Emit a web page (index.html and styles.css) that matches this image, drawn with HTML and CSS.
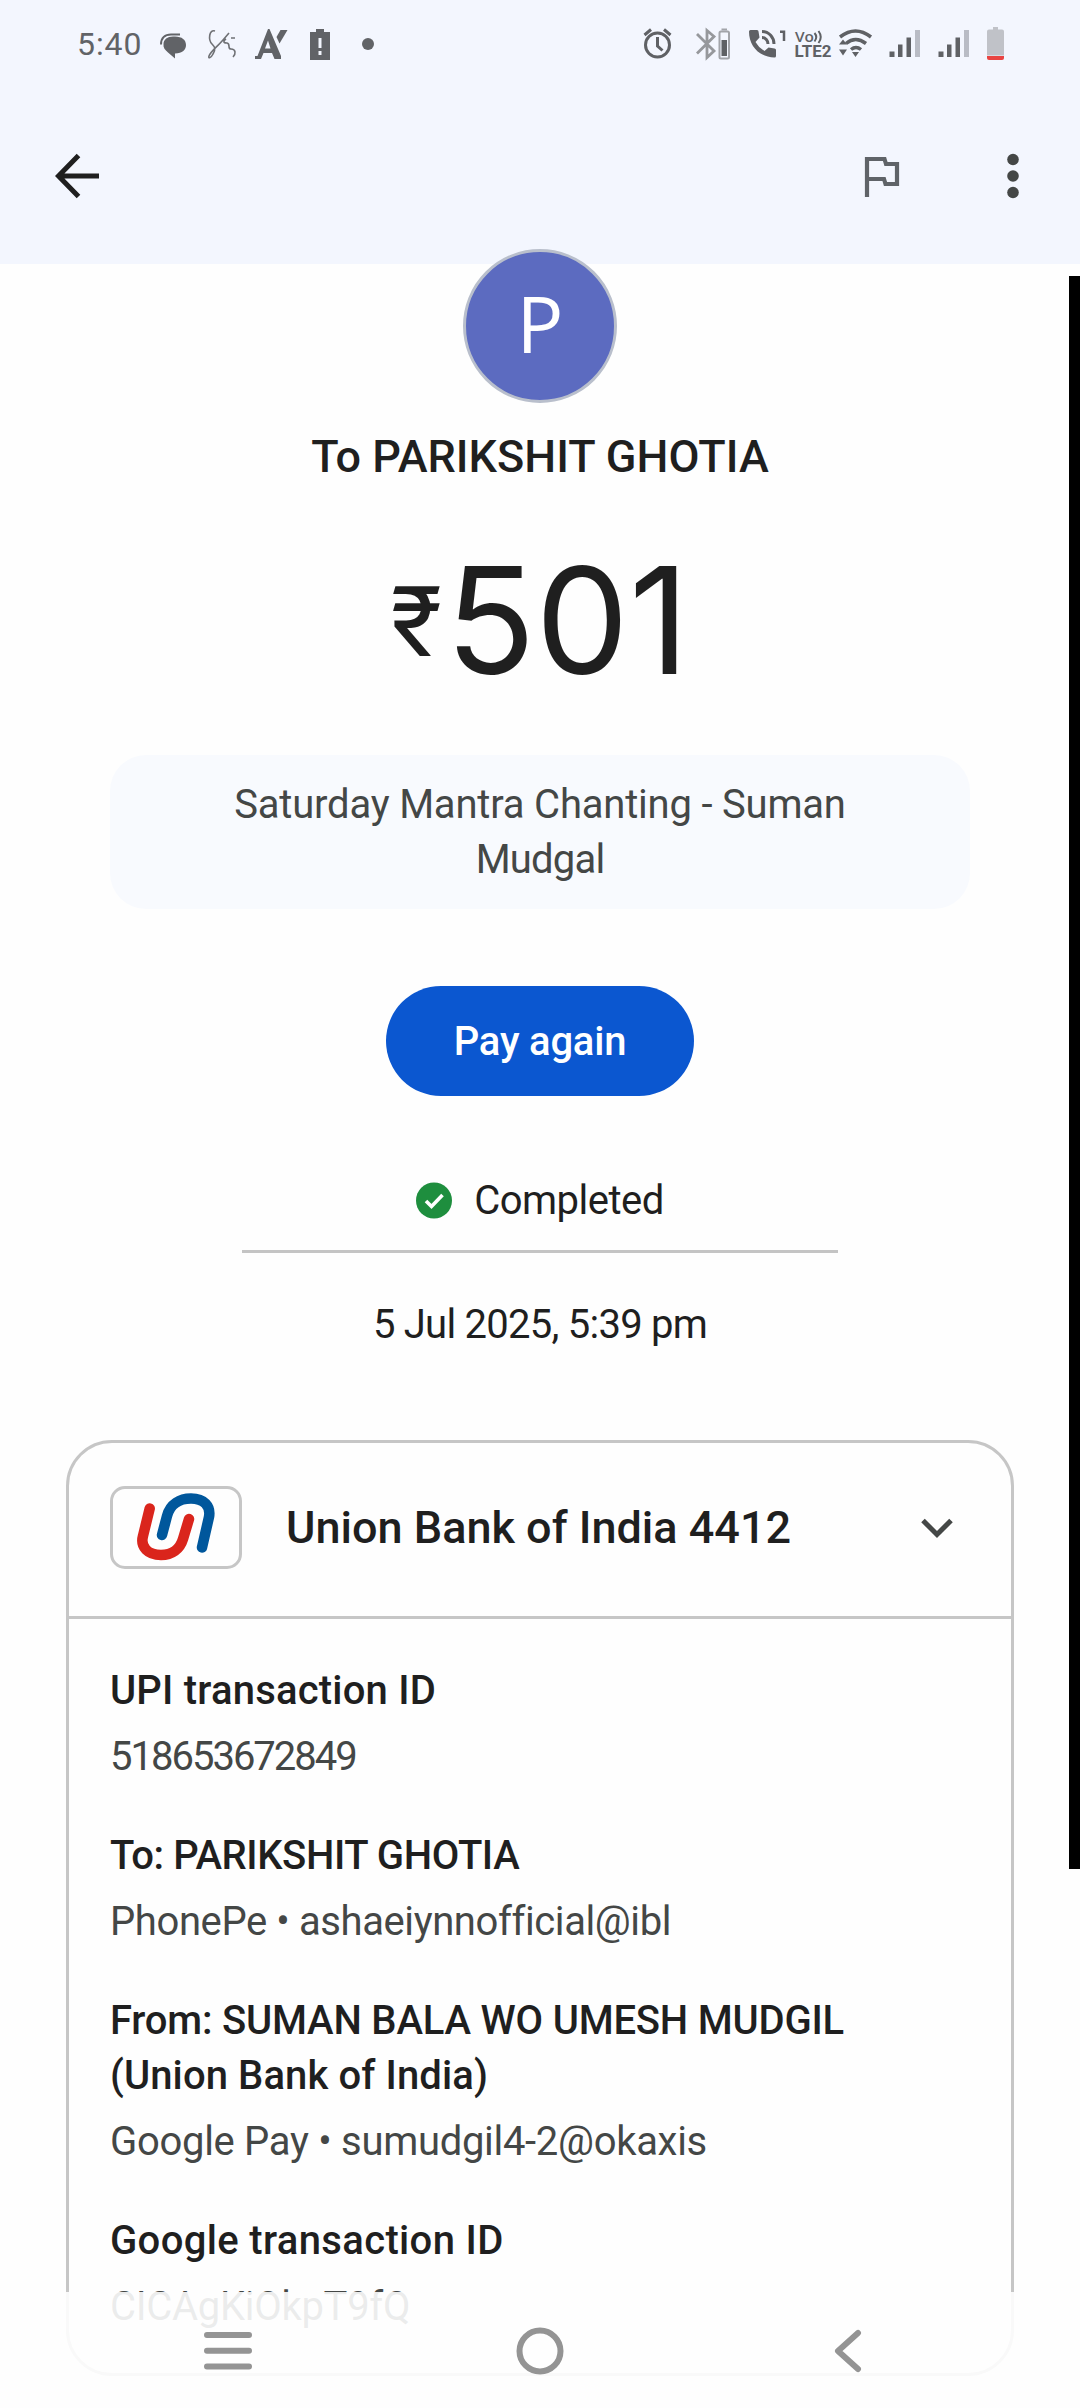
FILE: index.html
```html
<!DOCTYPE html>
<html lang="en">
<head>
<meta charset="utf-8">
<title>Transaction details</title>
<link rel="stylesheet" href="styles.css">
</head>
<body>
<div class="screen">
  <header class="top">
    <div class="status-bar">
      <span class="clock">5:40</span>
      <svg class="status-left" width="225" height="40" viewBox="155 24 225 40" fill="#616367">
        <path d="M161 44.500c0-6.500 4-10 10-10h9" fill="none" stroke="#616367" stroke-width="2"/>
        <path d="M173 36.500h2c7 0 11 3.500 11 8.500s-3.500 8-11 8.500v5l-7-6c-3-2.500-5-5-4.500-8.500 0-4.500 4-7.500 9.500-7.500z"/>
        <path d="M215 31c-6-2-7 9-3 13 3 3 4 5 1 10-2 4-5 5-4 2 2-5 8-9 14-16l6-7M226 39c-3 2-3 4 1 4 4 1 0 6 4 6 5 0 5 5 2 8M231 38l4 0" fill="none" stroke="#6f7175" stroke-width="1.600"/>
        <path fill-rule="evenodd" d="M255 59v-3h2.500l10.500-27h1.500L281 56v3h-6.500l-2.500-6h-8.500l-2.500 6zM265 48.500h5.500l-2.500-8z"/>
        <path d="M280.500 30h7l-8 13.500-3-6.500z"/>
        <path fill-rule="evenodd" d="M310 32h6v-3h8v3h6v28h-20zM318.500 38v10h3v-10zM318.500 51v4h3v-4z"/>
        <circle cx="368" cy="44" r="6"/>
      </svg>
      <svg class="status-right" width="370" height="40" viewBox="640 24 370 40" fill="#5f6165">
        <g fill="none" stroke="#5f6165" stroke-width="3">
          <circle cx="657.500" cy="45" r="12"/>
          <path d="M657.500 37v9l5 4.500M644.500 35l6.500-5.500M670.500 35l-6.500-5.500"/>
        </g>
        <path d="M697 34l17 17-7 6.500v-27l7 6-17 17" fill="none" stroke="#96989c" stroke-width="2.800"/>
        <rect x="719.500" y="31.500" width="9.500" height="27" rx="1.500" fill="none" stroke="#a2a4a9" stroke-width="2"/>
        <rect x="721.500" y="28.500" width="5.500" height="2" fill="#a2a4a9"/>
        <rect x="721.500" y="40" width="5.500" height="16"/>
        <path d="M749 31.500q0-1.500 1.500-1.500h6.500q1.500 0 1.500 1.500l1 6-4 4.500q3 5.500 9 9l4-3.500 6 1q1.500 0 1.500 1.500v6q0 1.500-1.500 1.500C759 57 749 46 749 31.500z"/>
        <path d="M762 31.500c7 0 12 6 12 12.500M762 37.500c3.500 0 6 3 6 6.500" fill="none" stroke="#5f6165" stroke-width="3"/>
        <path d="M780 31.700h4v9.300" fill="none" stroke="#5f6165" stroke-width="2.500"/>
        <text class="net-vo" x="795" y="42" textLength="19" lengthAdjust="spacingAndGlyphs">Vo</text>
        <path d="M814.500 33q3.500 4 0 8.500M818.500 31q4.500 6 0 12" fill="none" stroke="#5f6165" stroke-width="2"/>
        <text class="net-lte" x="794.500" y="57" textLength="37" lengthAdjust="spacingAndGlyphs">LTE2</text>
        <path d="M840 37q15.500-12 31 0M846 43.500q9.500-8 20 0M851 49.500q5-4 10 0" fill="none" stroke="#5f6165" stroke-width="3.500"/>
        <path d="M852 52h7l-3.500 5zM839 44.500l4-5 4 5zM839 49.500l4 6 4-6z"/>
        <g id="signal">
          <path d="M889.500 51.500h5v5.500h-5zM898 44.500h4.500v12.500h-4.500zM906.500 37.500h4.500v19.500h-4.500z"/>
          <path d="M915 30h5v27h-5z" fill="#b9bcc5"/>
        </g>
        <use href="#signal" x="49"/>
        <path d="M987 31.500q0-2 2-2h4v-2.500h5v2.500h4q2 0 2 2v24h-17z" fill="#c0c2c8"/>
        <path d="M987 56h17v2q0 2-2 2h-13q-2 0-2-2z" fill="#e94442"/>
      </svg>
    </div>
    <div class="app-bar">
      <svg width="46" height="46" viewBox="0 0 46 46" fill="none" stroke="#1f1f1f" stroke-width="5"><path d="M24.500 2.500L4.500 23l20 20.500M4.500 23H45"/></svg>
      <span class="spacer"></span>
      <svg class="flag" width="36" height="42" viewBox="0 0 36 42" fill="none" stroke="#5f6368" stroke-width="4.200"><path d="M3 42V4h17.500l1.500 5H33v20H21.500L20 24H3"/></svg>
      <svg width="12" height="46" viewBox="0 0 12 46" fill="#444746"><circle cx="6" cy="6.500" r="5.800"/><circle cx="6" cy="23" r="5.800"/><circle cx="6" cy="39.500" r="5.800"/></svg>
    </div>
  </header>

  <main class="content">
    <div class="avatar">P</div>
    <h1 class="payee">To PARIKSHIT GHOTIA</h1>
    <div class="amount"><span class="currency">₹</span><span class="digits">501</span></div>
    <div class="note"><span class="note-first">Saturday Mantra Chanting - Suman</span><br><span class="note-second">Mudgal</span></div>
    <button class="pay">Pay again</button>
    <div class="status">
      <svg width="36" height="37" viewBox="0 0 36 37"><circle cx="18" cy="18.500" r="18" fill="#1e8e3e"/><path d="M10 19l5.500 5.500L26.500 13" fill="none" stroke="#fff" stroke-width="3.600"/></svg>
      <span class="completed">Completed</span>
    </div>
    <div class="rule"></div>
    <div class="date">5 Jul 2025, 5:39 pm</div>

    <section class="card">
      <div class="bank">
        <div class="bank-logo">
          <svg width="132" height="82" viewBox="0 0 132 82" fill="none" stroke-width="10.500" stroke-linecap="round">
            <path d="M39.700 22.500L33 50C30 61 38 69 51 69C62 69 70 63 73 53L79 33" stroke="#da251c"/>
            <path d="M52 49L57 30C60 18 70 12.500 81 12.500C94 12.500 101 20 99 31L92 61.500" stroke="#00579c"/>
          </svg>
        </div>
        <span class="bank-name">Union Bank of India 4412</span>
        <svg class="chevron" width="32" height="24" viewBox="0 0 32 24" fill="none" stroke="#444746" stroke-width="5"><path d="M2 4.500L16 18.500 30 4.500"/></svg>
      </div>
      <dl class="details">
        <dt class="upi-label">UPI transaction ID</dt>
        <dd class="upi-id">518653672849</dd>
        <dt class="to-label">To: PARIKSHIT GHOTIA</dt>
        <dd class="to-id">PhonePe • ashaeiynnofficial@ibl</dd>
        <dt><span class="from-name">From: SUMAN BALA WO UMESH MUDGIL</span><br><span class="from-bank">(Union Bank of India)</span></dt>
        <dd class="from-id">Google Pay • sumudgil4-2@okaxis</dd>
        <dt class="google-label">Google transaction ID</dt>
        <dd class="google-id">CICAgKiOkpT9fQ</dd>
      </dl>
    </section>
  </main>

  <div class="scroll-edge"></div>
  <nav class="system-nav">
    <svg width="48" height="38" viewBox="0 0 48 38" stroke="#949494" stroke-width="6" stroke-linecap="round"><path d="M3 3h42M3 18.700h42M3 34.500h42"/></svg>
    <svg class="home" width="48" height="48" viewBox="0 0 48 48" fill="none" stroke="#949494" stroke-width="6"><circle cx="24" cy="24" r="20.500"/></svg>
    <svg width="28" height="44" viewBox="0 0 28 44" fill="none" stroke="#949494" stroke-width="6" stroke-linecap="round" stroke-linejoin="round"><path d="M24 4L4 22l20 18"/></svg>
  </nav>
</div>
</body>
</html>
```
FILE: styles.css
```css
* { box-sizing: border-box; }
body {
  margin: 0;
  background: #fefefe;
  color: #1f1f1f;
  font: 400 40px/55px Roboto, "Open Sans", sans-serif;
}
.screen { position: relative; width: 1080px; height: 2408px; overflow: hidden; }

.top { height: 264px; background: #f3f6fe; }
.status-bar { display: flex; align-items: center; height: 88px; padding: 0 70px 0 77px; }
.clock { width: 78px; font-size: 32px; color: #616367; letter-spacing: .9px; }
.status-right { margin-left: auto; }
.net-vo { font: 600 14px "Open Sans", sans-serif; }
.net-lte { font: 700 16px Roboto, sans-serif; }
.app-bar { display: flex; align-items: center; height: 176px; padding: 0 61px 0 54px; }
.spacer { flex: 1; }
.flag { margin-right: 107px; }

.content { display: flex; flex-direction: column; align-items: center; }
.avatar {
  width: 154px; height: 154px; margin-top: -15px;
  border: 3px solid #b9bfcc; border-radius: 50%;
  background: #5c6bc0; color: #fff;
  font-family: "Open Sans", sans-serif; font-size: 78px; line-height: 143px; text-align: center;
}
.payee { margin: 24px 0 0; font-size: 45px; font-weight: 500; line-height: 60px; }
.amount { display: flex; height: 160px; margin-top: 56px; line-height: 160px; }
.currency { margin-right: 4px; font-size: 98px; }
.digits { font-family: Inter, Roboto, sans-serif; font-size: 148px; line-height: 156px; }
.note {
  width: 860px; height: 154px; margin-top: 52px; padding-top: 22px;
  border-radius: 36px; background: #f8fafe; color: #444746; text-align: center;
}
.note-first { letter-spacing: -.2px; }
.note-second { letter-spacing: -.8px; }
.pay {
  width: 308px; height: 110px; margin-top: 77px; padding: 0;
  border: 0; border-radius: 55px; background: #0b57d0; color: #fff;
  font: inherit; font-weight: 500; letter-spacing: -.2px;
}
.status { display: flex; align-items: center; gap: 22px; margin-top: 77px; }
.completed { letter-spacing: -.5px; }
.rule { width: 596px; height: 3px; margin-top: 22px; background: #c4c4c4; }
.date { margin-top: 44px; letter-spacing: -.75px; }

.card { width: 948px; height: 936px; margin-top: 88px; border: 3px solid #c6c6c6; border-radius: 46px; }
.bank { display: flex; align-items: center; height: 176px; padding: 0 58px 4px 41px; border-bottom: 3px solid #c6c6c6; }
.bank-logo { display: flex; width: 132px; height: 83px; margin-right: 44px; border: 3px solid #c6c6c6; border-radius: 15px; }
.bank-logo svg { margin: -3px; }
.bank-name { font-size: 45px; font-weight: 500; white-space: nowrap; }
.chevron { margin-left: auto; }
.details { margin: 0; padding: 44px 41px 0; white-space: nowrap; }
.details dt { font-weight: 500; }
.details dd { margin: 11px 0 44px; color: #444746; }
.upi-label { letter-spacing: .2px; }
.upi-id { letter-spacing: -2px; }
.to-label { letter-spacing: -.4px; }
.to-id { letter-spacing: -.4px; }
.from-name { letter-spacing: -.2px; }
.from-bank { letter-spacing: .1px; }
.from-id { letter-spacing: -.3px; }
.google-label { letter-spacing: .35px; }
.google-id { letter-spacing: -.3px; }

.scroll-edge { position: absolute; top: 276px; right: 0; width: 11px; height: 1593px; background: #000; }
.system-nav {
  position: absolute; left: 0; bottom: 0;
  display: flex; align-items: center;
  width: 1080px; height: 116px; padding: 2px 0 0 204px;
  background: rgba(254, 254, 254, .9);
}
.home { margin: 0 270px 0 264px; }
```
